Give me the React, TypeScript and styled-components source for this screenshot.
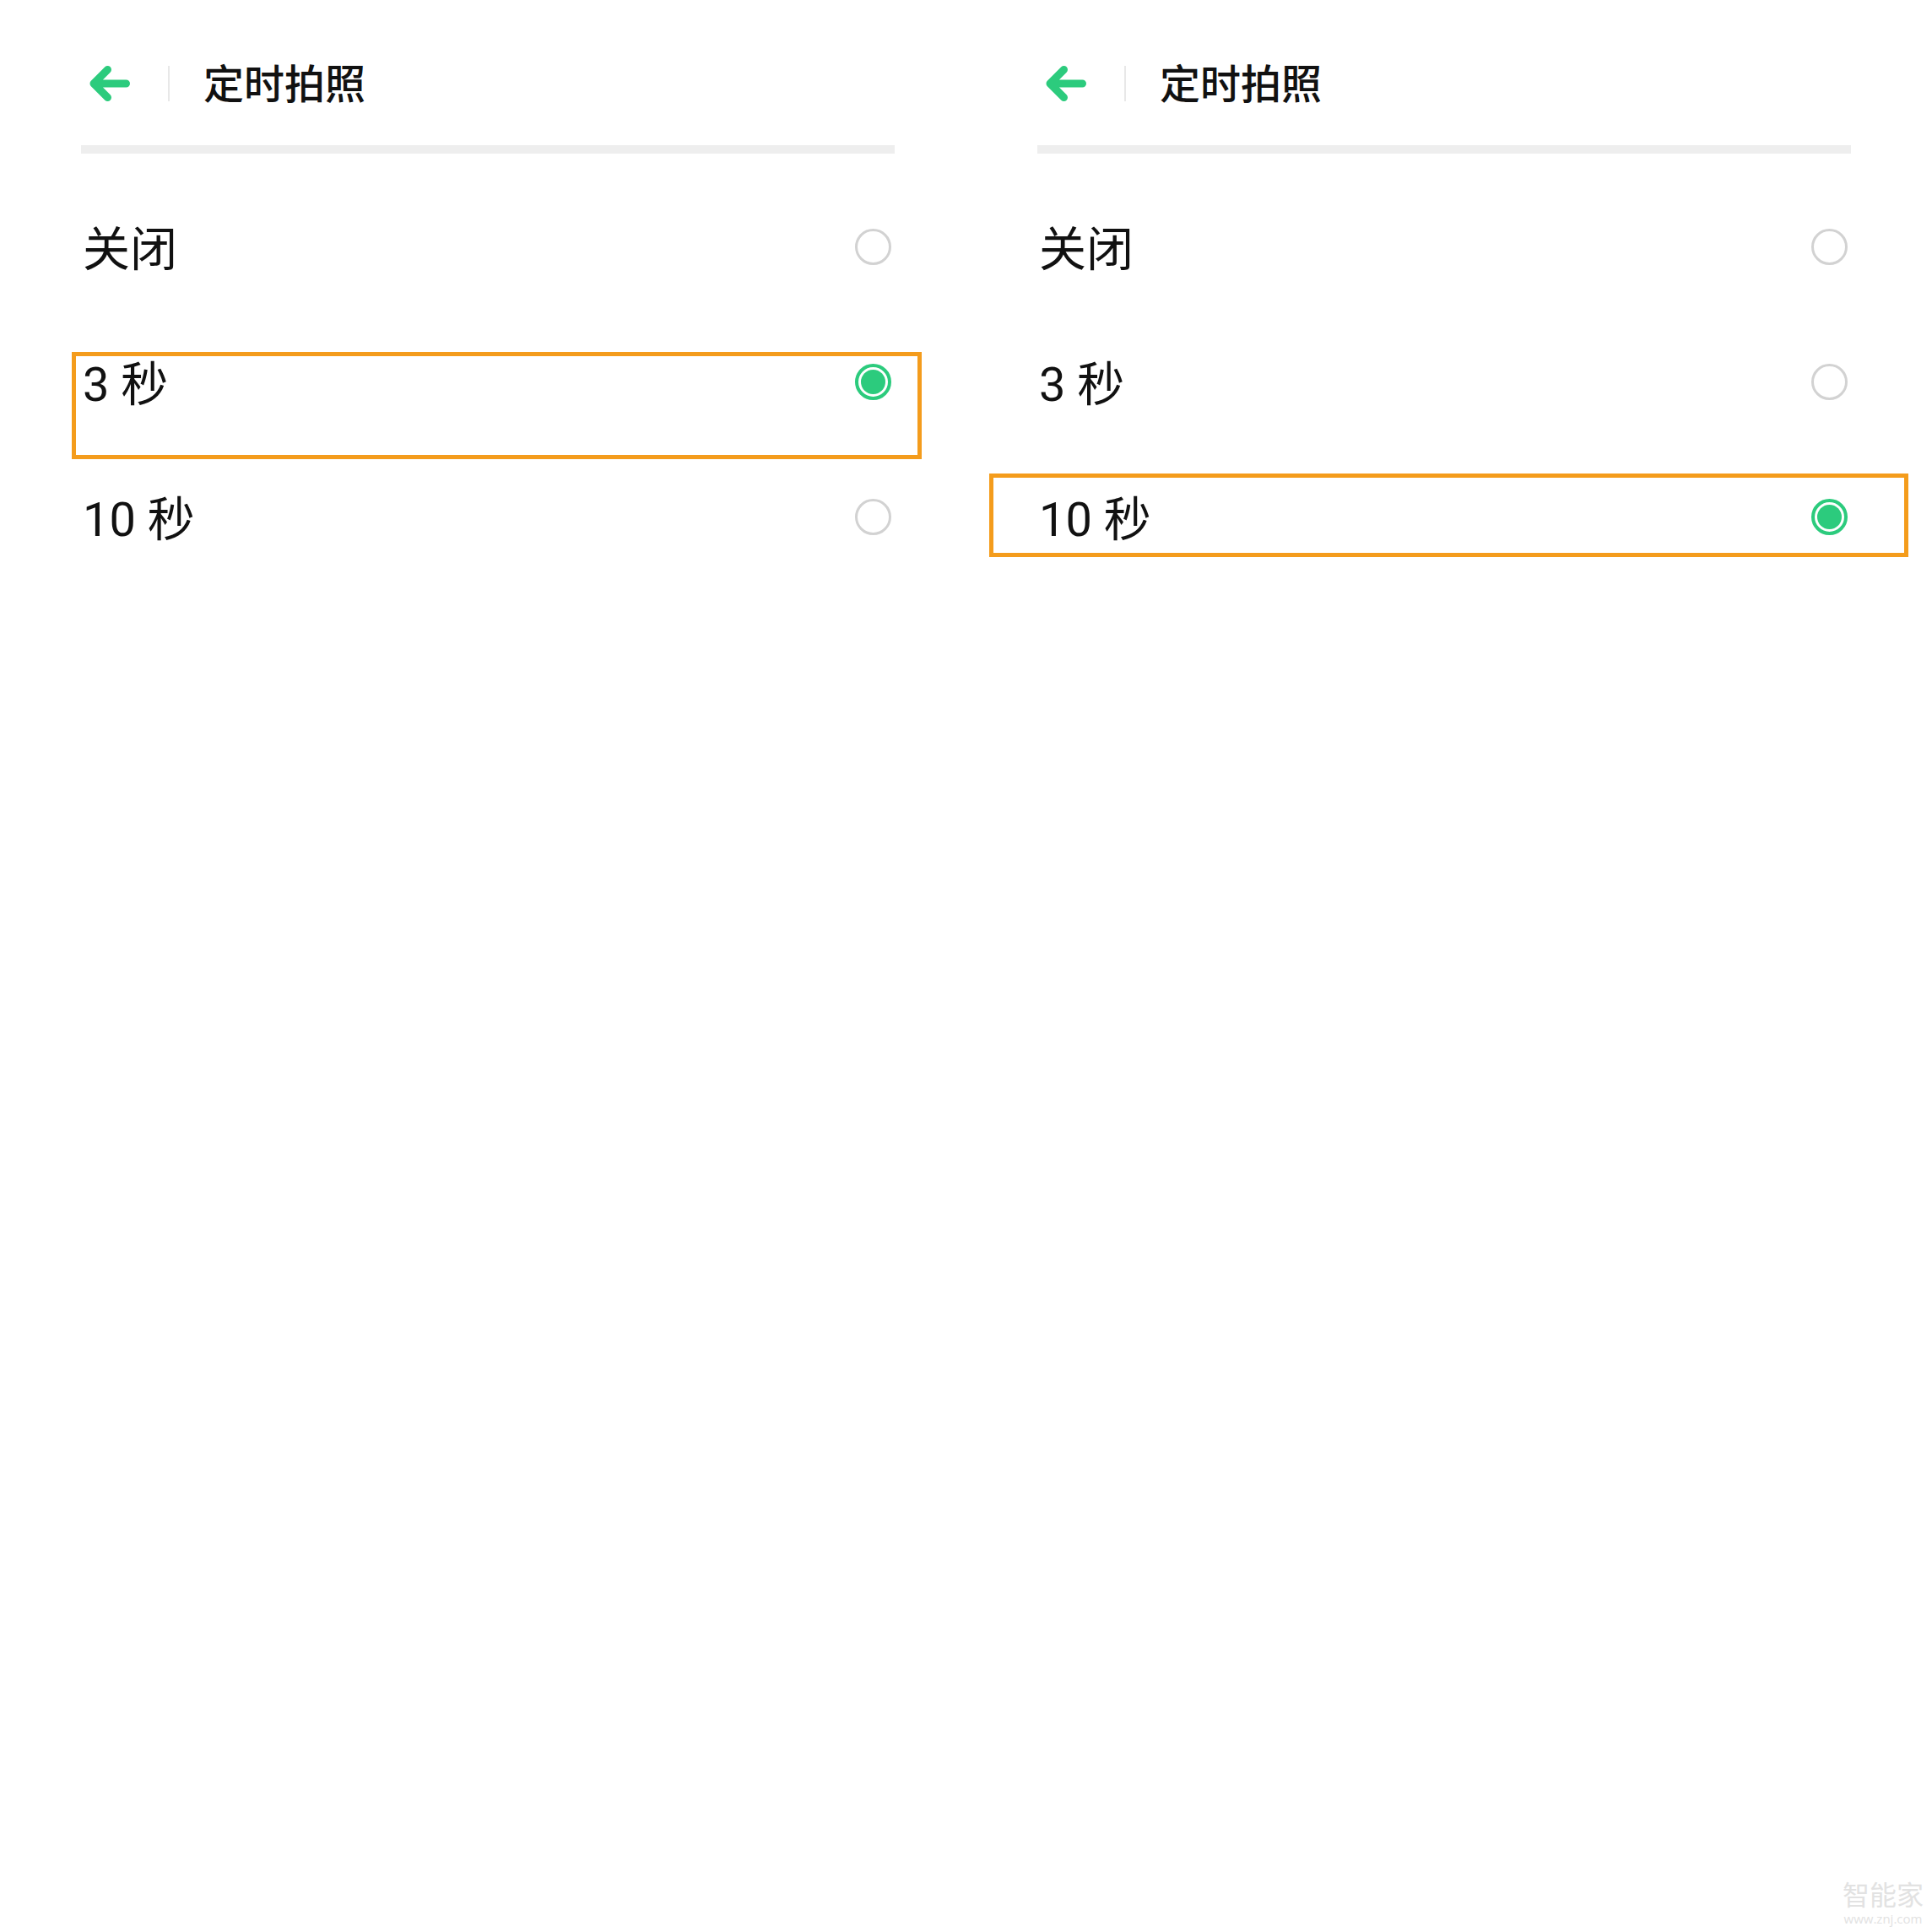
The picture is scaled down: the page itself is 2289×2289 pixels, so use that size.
import styled, { createGlobalStyle } from 'styled-components';

const GlobalStyle = createGlobalStyle`
  html, body {
    margin: 0;
    padding: 0;
    background: #ffffff;
  }
  body {
    font-family: Roboto, "Noto Sans CJK SC", sans-serif;
    color: #111111;
  }
`;

const GREEN = '#2ccb7d';
const ORANGE = '#f49c1c';

interface Option {
  label: string;
}

interface Highlight {
  left: number;
  top: number;
  width: number;
  height: number;
}

interface PanelData {
  width: number;
  selected: number;
  highlight: Highlight;
}

const options: Option[] = [{ label: '关闭' }, { label: '3 秒' }, { label: '10 秒' }];

const panels: PanelData[] = [
  { width: 1133, selected: 1, highlight: { left: 85, top: 417, width: 1007, height: 127 } },
  { width: 1156, selected: 2, highlight: { left: 39, top: 561, width: 1089, height: 99 } },
];

const Page = styled.div`
  position: relative;
  display: flex;
  width: 2289px;
  min-height: 2289px;
  overflow: hidden;
`;

const Panel = styled.section<{ $width: number }>`
  position: relative;
  box-sizing: border-box;
  width: ${(p) => p.$width}px;
  flex-shrink: 0;
  padding-left: 96px;
`;

const Content = styled.div`
  width: 964px;
  display: flex;
  flex-direction: column;
`;

const Header = styled.header`
  display: flex;
  align-items: center;
  height: 84px;
  margin-top: 57px;
  padding-left: 10px;
`;

const BackButton = styled.button`
  display: flex;
  align-items: center;
  padding: 0;
  border: none;
  background: none;
  cursor: pointer;
`;

const Divider = styled.span`
  width: 2px;
  height: 42px;
  margin-left: 45px;
  background: #e8e8e8;
`;

const Title = styled.h1`
  margin: -6px 0 0 40px;
  font-family: "Noto Sans CJK SC", sans-serif;
  font-size: 48px;
  font-weight: 500;
  color: #111111;
  letter-spacing: 0;
`;

const Rule = styled.div`
  height: 10px;
  margin-top: 31px;
  margin-bottom: 30px;
  background: #eeeeee;
`;

const Row = styled.label`
  display: flex;
  align-items: center;
  justify-content: space-between;
  height: 160px;
  cursor: pointer;
`;

const RowLabel = styled.span`
  font-family: Roboto, "Noto Sans CJK SC", sans-serif;
  font-size: 56px;
  line-height: 1;
  color: #111111;
  padding: 7px 0 0 2px;
`;

const Radio = styled.span<{ $checked: boolean }>`
  box-sizing: border-box;
  width: 43px;
  height: 43px;
  margin-right: 4px;
  border-radius: 50%;
  border: ${(p) => (p.$checked ? `4px solid ${GREEN}` : '3px solid #d2d2d2')};
  padding: 3px;
  display: flex;

  &::after {
    content: '';
    flex: 1;
    border-radius: 50%;
    background: ${(p) => (p.$checked ? GREEN : 'transparent')};
  }
`;

const Marker = styled.div`
  position: absolute;
  box-sizing: border-box;
  border: 5px solid ${ORANGE};
  pointer-events: none;
`;

const Watermark = styled.div`
  position: absolute;
  right: 10px;
  bottom: 8px;
  display: flex;
  flex-direction: column;
  align-items: center;
  color: #e2e2e2;
  font-family: "Noto Sans CJK SC", sans-serif;
  line-height: 1;
`;

const WatermarkName = styled.span`
  font-size: 32px;
`;

const WatermarkUrl = styled.span`
  margin-top: 7px;
  font-family: "Open Sans", sans-serif;
  font-size: 15px;
`;

function BackArrow() {
  return (
    <svg width="48" height="42" viewBox="0 0 48 42" fill="none">
      <path
        d="M43.5 21H5M21.5 4.5L5 21L21.5 37.5"
        stroke={GREEN}
        strokeWidth="9"
        strokeLinecap="round"
        strokeLinejoin="round"
      />
    </svg>
  );
}

function TimerPanel({ width, selected, highlight }: PanelData) {
  return (
    <Panel $width={width}>
      <Content>
        <Header>
          <BackButton aria-label="返回">
            <BackArrow />
          </BackButton>
          <Divider />
          <Title>定时拍照</Title>
        </Header>
        <Rule />
        {options.map((o, i) => (
          <Row key={o.label}>
            <RowLabel>{o.label}</RowLabel>
            <Radio $checked={i === selected} />
          </Row>
        ))}
      </Content>
      <Marker
        style={{
          left: highlight.left,
          top: highlight.top,
          width: highlight.width,
          height: highlight.height,
        }}
      />
    </Panel>
  );
}

export default function App() {
  return (
    <>
      <GlobalStyle />
      <Page>
        {panels.map((p, i) => (
          <TimerPanel key={i} {...p} />
        ))}
        <Watermark>
          <WatermarkName>智能家</WatermarkName>
          <WatermarkUrl>www.znj.com</WatermarkUrl>
        </Watermark>
      </Page>
    </>
  );
}
